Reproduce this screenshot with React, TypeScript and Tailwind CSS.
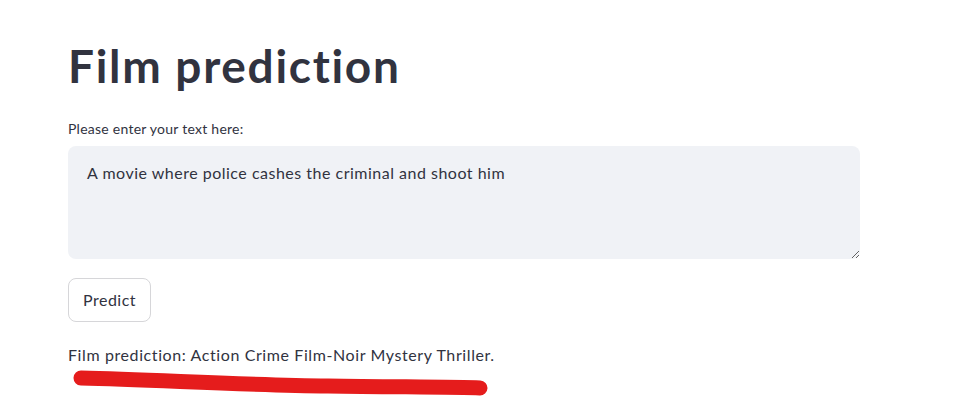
import React from 'react';

export default function App() {
  return (
    <div className="min-h-[409px] w-full bg-white text-[#31333f]" style={{ fontFamily: 'Lato, "Noto Sans", sans-serif' }}>
      <div className="ml-[68px] w-[792px] pt-[38px]">
        {/* Title */}
        <h1 className="text-[46px] font-bold leading-[56px] tracking-[1.7px] text-[#31333f]">Film prediction</h1>

        {/* Text area */}
        <label className="mt-[25px] block text-[14px] leading-[20px] tracking-[0.25px]">Please enter your text here:</label>
        <textarea
          readOnly
          defaultValue="A movie where police cashes the criminal and shoot him"
          className="mt-[7px] block h-[113px] w-full resize-y rounded-lg bg-[#f0f2f6] px-[19px] pt-[14px] text-[16px] leading-[25px] tracking-[0.5px] text-[#31333f] outline-none"
        />

        {/* Button */}
        <button className="mt-[19px] h-[44px] rounded-lg border border-[#d6d6d9] bg-white px-[14px] text-[16px] tracking-[0.5px] text-[#31333f]">
          Predict
        </button>

        {/* Result */}
        <p className="mt-[21px] text-[16px] leading-[24px] tracking-[0.6px]">Film prediction: Action Crime Film-Noir Mystery Thriller.</p>
      </div>

      {/* Red highlight stroke */}
      <svg className="ml-[68px] mt-[3px] block" width="430" height="32" viewBox="0 0 430 32">
        <path d="M13 8 C 90 10, 180 15, 260 16 C 330 17, 390 17, 412 18" stroke="#e51c1c" strokeWidth="15" strokeLinecap="round" fill="none" />
      </svg>
    </div>
  );
}
